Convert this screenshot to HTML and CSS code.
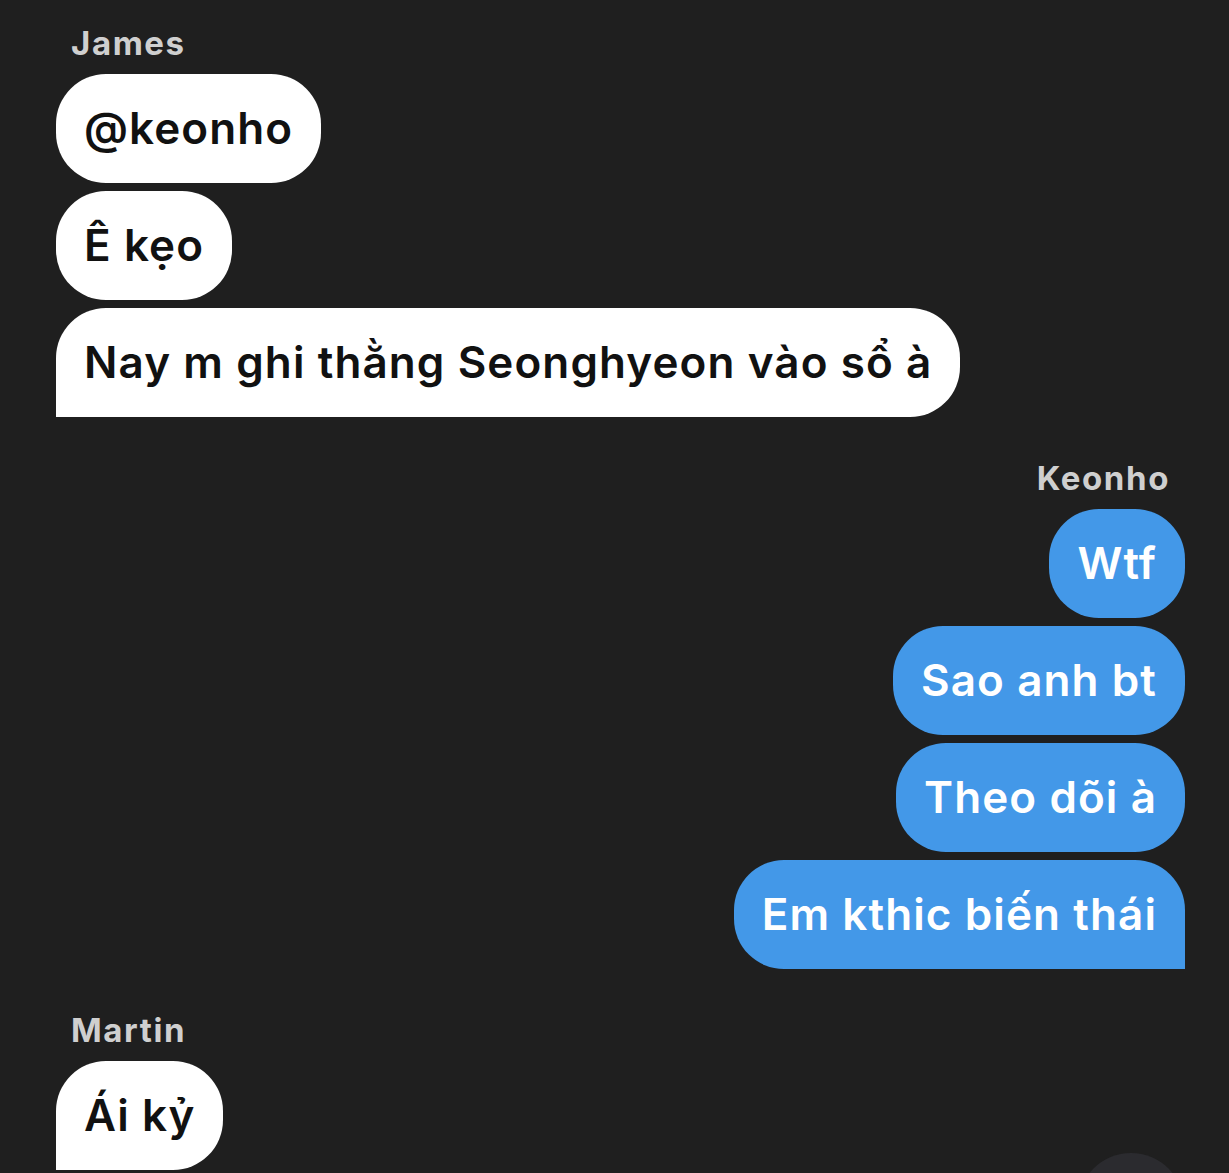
FILE: index.html
```html
<!DOCTYPE html>
<html lang="vi">
<head>
<meta charset="utf-8">
<link rel="stylesheet" href="styles.css">
</head>
<body>
<div class="chat">
  <section class="group left">
    <div class="name">James</div>
    <div class="bubble">@keonho</div>
    <div class="bubble">Ê kẹo</div>
    <div class="bubble last">Nay m ghi thằng Seonghyeon vào sổ à</div>
  </section>
  <section class="group right">
    <div class="name">Keonho</div>
    <div class="bubble">Wtf</div>
    <div class="bubble">Sao anh bt</div>
    <div class="bubble">Theo dõi à</div>
    <div class="bubble last">Em kthic biến thái</div>
  </section>
  <section class="group left">
    <div class="name">Martin</div>
    <div class="bubble last">Ái kỷ</div>
  </section>
</div>
<div class="fab"></div>
</body>
</html>
```
FILE: styles.css
```css
html, body {
  margin: 0;
  padding: 0;
  background: #1f1f1f;
  height: 100%;
  overflow: hidden;
}
body {
  font-family: "Inter", "Noto Sans", sans-serif;
}
.chat {
  padding: 23px 44px 0 56px;
  display: flex;
  flex-direction: column;
  gap: 41px;
}
.group {
  display: flex;
  flex-direction: column;
  gap: 8px;
}
.group.left { align-items: flex-start; }
.group.right { align-items: flex-end; }
.name {
  color: #cfcfcf;
  font-weight: 700;
  font-size: 33px;
  letter-spacing: 1.6px;
  line-height: 40px;
  margin: 0 15px 3px 15px;
}
.bubble {
  font-size: 44px;
  font-weight: 600;
  letter-spacing: 1.1px;
  line-height: 57px;
  padding: 26px 28px;
  border-radius: 50px;
}
.left .bubble { background: #ffffff; color: #111111; }
.right .bubble { background: #4398e8; color: #ffffff; }
.left .bubble.last { border-bottom-left-radius: 0; }
.right .bubble.last { border-bottom-right-radius: 0; }
.fab {
  position: absolute;
  left: 1078px;
  top: 1153px;
  width: 106px;
  height: 106px;
  border-radius: 50%;
  background: #2b2b2f;
}
```
